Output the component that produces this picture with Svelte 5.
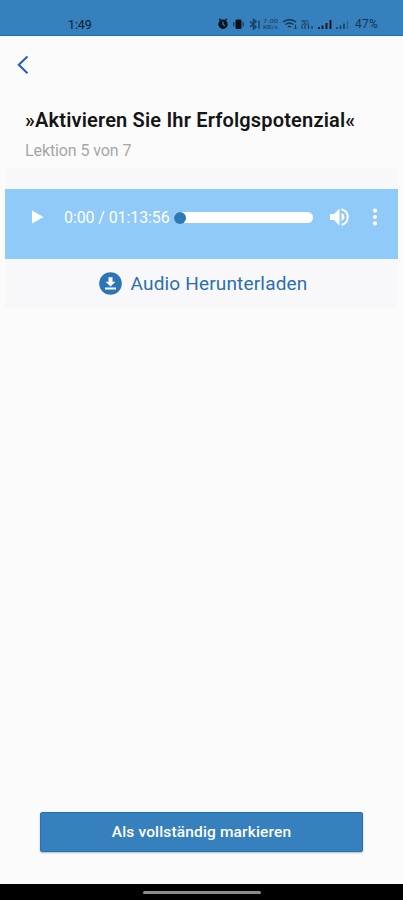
<script>
  const lesson = {
    title: '»Aktivieren Sie Ihr Erfolgspotenzial«',
    progress: 'Lektion 5 von 7',
    time: '0:00 / 01:13:56'
  };
</script>

<div class="screen">
  <div class="status">
    <span class="clock">1:49</span>
    <div class="indicators">
      <svg width="137" height="14" viewBox="0 0 137 14" aria-hidden="true">
        <circle cx="5" cy="7.3" r="4.7" fill="#06121c" />
        <path d="M5 4.6v3l2 .9" stroke="#3680bd" stroke-width="1.2" fill="none" />
        <path d="M1 3l1.500-1.300M9 3L7.500 1.700" stroke="#06121c" stroke-width="1.200" />
        <rect x="17.500" y="2.500" width="6" height="9.500" rx="1.200" fill="#06121c" />
        <path d="M15.800 5v4.500M25.200 5v4.500" stroke="#133c5c" stroke-width="1.200" />
        <path d="M32 4.500l6 5.500-2.500 2V2.500L38 4.500 32 10M41 3.500v8" stroke="#163e5e" stroke-width="1.400" fill="none" />
        <path d="M65 5q6.500-4.500 13 0M67.500 7.500q4-3 8 0M70 10q1.500-1.500 3 0" stroke="#17364d" stroke-width="1.500" fill="none" />
        <path d="M77.500 7.500v4.500M76 10.500l1.500 1.500 1.500-1.500" stroke="#17364d" stroke-width=".9" fill="none" />
        <text x="45" y="5.500" font-size="5" textLength="15" lengthAdjust="spacingAndGlyphs">7.00</text>
        <text x="45" y="12" font-size="5" textLength="15" lengthAdjust="spacingAndGlyphs">KB/s</text>
        <text x="83" y="8" font-size="7" textLength="8">5G</text>
        <path d="M84 12V8.500M87 12V8M90.500 12V8M94 12V9" stroke="#193e59" stroke-width="1.200" />
        <path d="M101 12v-2M104.500 12V8.500M108.500 12V6M112.500 12V3" stroke="#06121c" stroke-width="1.800" />
        <path d="M119 12v-2M122.500 12V8.500M126 12V6.500" stroke="#173e5b" stroke-width="1.600" />
        <path d="M129.500 12V4" stroke="#2a618b" stroke-width="1.200" />
      </svg>
      <span class="battery">47%</span>
    </div>
  </div>

  <header>
    <button class="back" aria-label="Zurück">
      <svg width="13" height="20" viewBox="0 0 13 20"><path d="M11.500 1.500L2.800 9.800l8.700 8.500" fill="none" stroke="#235fc5" stroke-width="2.100" /></svg>
    </button>
    <h1><span>{lesson.title}</span></h1>
    <p>{lesson.progress}</p>
  </header>

  <section>
    <div class="player">
      <svg class="play" width="12" height="14" viewBox="0 0 12 14"><path d="M0 .5L11.500 7 0 13.500z" fill="#fff" /></svg>
      <span class="time">{lesson.time}</span>
      <div class="track"><i></i></div>
      <svg class="volume" width="20" height="20" viewBox="0 0 20 20">
        <path d="M0 7h4l5.500-5.500v17L4 13H0z" fill="#fff" />
        <path d="M11.500 5.800q3 1.400 3 4.200t-3 4.200z" fill="#fff" />
        <path d="M11.500 2.200a8 8 0 0 1 0 15.600" stroke="#fff" stroke-width="2.100" fill="none" />
      </svg>
      <svg class="more" width="6" height="18" viewBox="0 0 6 18" fill="#fff"><circle cx="3" cy="2.600" r="2.100" /><circle cx="3" cy="9" r="2.100" /><circle cx="3" cy="15.400" r="2.100" /></svg>
    </div>
    <button class="download">
      <svg width="23" height="23" viewBox="0 0 23 23"><circle cx="11.500" cy="11.500" r="11.300" fill="#2c75b5" /><path d="M9.500 5.300h4v4.500h3l-5 4.700-5-4.700h3zM6 15.500h11v2H6z" fill="#fff" /></svg>
      <span>Audio Herunterladen</span>
    </button>
  </section>

  <main></main>
  <button class="complete"><span>Als vollständig markieren</span></button>
  <div class="navigation"><i></i></div>
</div>

<style>
  :global(body) { margin: 0; }
  .screen { width: 403px; height: 900px; display: flex; flex-direction: column; background: #fbfbfb; font-family: Roboto, sans-serif; overflow: hidden; }
  button { border: 0; padding: 0; background: none; font-family: inherit; }
  svg { display: block; flex: none; }
  span { white-space: nowrap; }
  .status { height: 36px; box-sizing: border-box; flex: none; display: flex; align-items: flex-start; background: #3680bd; border-bottom: 1px solid #1f6daf; padding: 17px 0 0 68px; color: #0b1d2b; }
  .clock { width: 150px; font-size: 12.500px; line-height: 15px; letter-spacing: -.1px; }
  .indicators { display: flex; }
  .indicators text { fill: #1b4869; font-family: Roboto, sans-serif; font-weight: 500; }
  .battery { font-size: 12px; line-height: 15px; letter-spacing: .2px; color: #14374f; }
  header { height: 132px; flex: none; display: flex; flex-direction: column; align-items: flex-start; }
  .back { margin: 19px 0 0 16px; }
  h1 { margin: 33px 0 0 25px; font-size: 20px; line-height: 24px; font-weight: 600; color: #151515; letter-spacing: .17px; }
  p { margin: 8px 0 0 25px; font-size: 16px; line-height: 22px; color: #a6a6a6; letter-spacing: -.1px; }
  section { height: 140px; flex: none; margin: 0 5px; background: #f8f8fa; padding-top: 21px; box-sizing: border-box; }
  .player { height: 70px; box-sizing: border-box; padding: 14px 20px 28px 27px; background: #90caf8; display: flex; align-items: center; }
  .time { width: 106px; margin-left: 20px; padding-top: 1px; color: #fff; font-size: 16px; line-height: 20px; letter-spacing: -.1px; }
  .track { width: 139px; height: 11px; margin-left: 4px; border-radius: 6px; background: #fff; flex: none; }
  .track i { display: block; width: 12px; height: 12px; border-radius: 50%; background: #2e78b8; }
  .volume { margin-left: 17px; }
  .more { margin-left: 22px; }
  .download { width: 100%; height: 48px; padding-left: 3px; display: flex; align-items: center; justify-content: center; gap: 9px; color: #2c6fac; font-size: 19px; line-height: 24px; letter-spacing: .17px; }
  .download span { padding-top: 1px; }
  main { flex: 1; }
  .complete { width: 323px; height: 40px; flex: none; margin: 0 0 32px 40px; background: #3680bd; border: 1px solid #2472b4; border-radius: 2px; box-shadow: 0 1px 2px #0004; color: #fff; font-size: 15.500px; font-weight: 500; line-height: 20px; letter-spacing: .15px; }
  .navigation { height: 16px; flex: none; background: #000; display: flex; justify-content: center; padding-top: 0; }
  .navigation i { width: 118px; height: 3px; margin-top: 7px; border-radius: 2px; background: #8b8b8b; }
</style>
